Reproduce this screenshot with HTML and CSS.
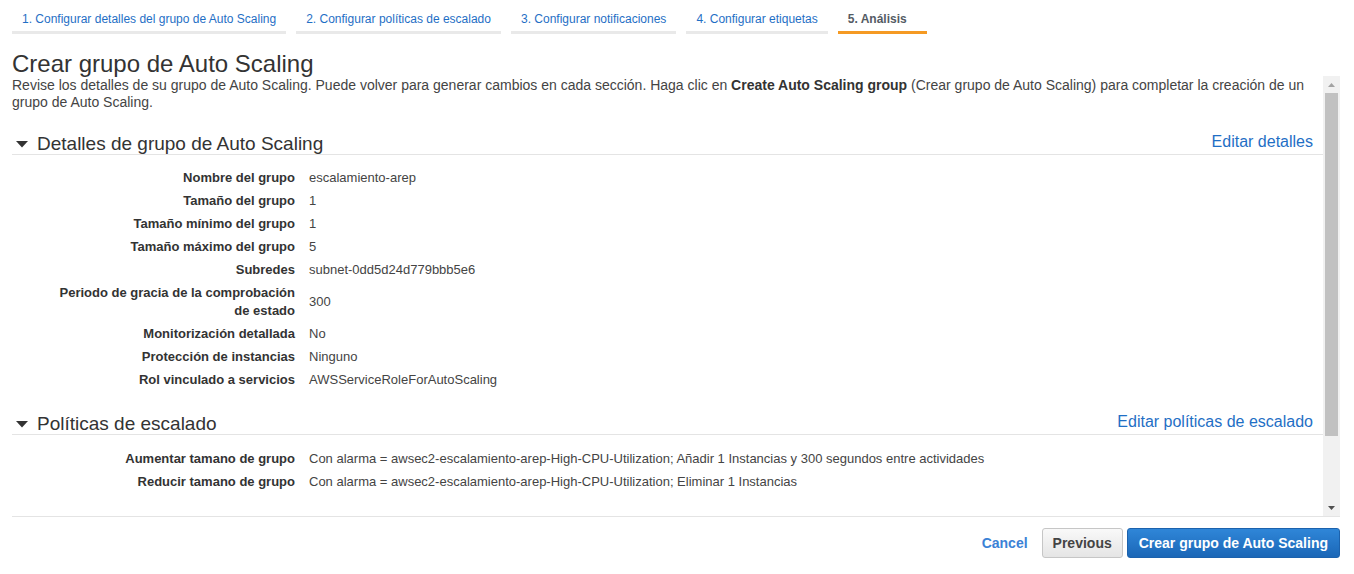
FILE: index.html
```html
<!DOCTYPE html>
<html lang="es">
<head>
<meta charset="utf-8">
<title>Crear grupo de Auto Scaling</title>
<link rel="stylesheet" href="styles.css">
</head>
<body>
<div class="page">
  <nav class="steps">
    <a class="step">1. Configurar detalles del grupo de Auto Scaling</a>
    <a class="step">2. Configurar políticas de escalado</a>
    <a class="step">3. Configurar notificaciones</a>
    <a class="step">4. Configurar etiquetas</a>
    <a class="step active">5. Análisis</a>
  </nav>

  <h1 class="title">Crear grupo de Auto Scaling</h1>

  <div class="scroll-area">
    <div class="scroll-content">
      <p class="desc">Revise los detalles de su grupo de Auto Scaling. Puede volver para generar cambios en cada sección. Haga clic en <b>Create Auto Scaling group</b> (Crear grupo de Auto Scaling) para completar la creación de un grupo de Auto Scaling.</p>

      <section class="section">
        <div class="section-head">
          <h2 class="section-title"><svg class="caret" width="12" height="7" viewBox="0 0 12 7"><polygon points="0,0 12,0 6,6.5" fill="#333"/></svg>Detalles de grupo de Auto Scaling</h2>
          <a class="edit-link">Editar detalles</a>
        </div>
        <dl class="details">
          <div class="row"><dt>Nombre del grupo</dt><dd>escalamiento-arep</dd></div>
          <div class="row"><dt>Tamaño del grupo</dt><dd>1</dd></div>
          <div class="row"><dt>Tamaño mínimo del grupo</dt><dd>1</dd></div>
          <div class="row"><dt>Tamaño máximo del grupo</dt><dd>5</dd></div>
          <div class="row"><dt>Subredes</dt><dd>subnet-0dd5d24d779bbb5e6</dd></div>
          <div class="row"><dt>Periodo de gracia de la comprobación de estado</dt><dd>300</dd></div>
          <div class="row"><dt>Monitorización detallada</dt><dd>No</dd></div>
          <div class="row"><dt>Protección de instancias</dt><dd>Ninguno</dd></div>
          <div class="row"><dt>Rol vinculado a servicios</dt><dd>AWSServiceRoleForAutoScaling</dd></div>
        </dl>
      </section>

      <section class="section">
        <div class="section-head">
          <h2 class="section-title"><svg class="caret" width="12" height="7" viewBox="0 0 12 7"><polygon points="0,0 12,0 6,6.5" fill="#333"/></svg>Políticas de escalado</h2>
          <a class="edit-link">Editar políticas de escalado</a>
        </div>
        <dl class="details details-tight">
          <div class="row"><dt>Aumentar tamano de grupo</dt><dd>Con alarma = awsec2-escalamiento-arep-High-CPU-Utilization; Añadir 1 Instancias y 300 segundos entre actividades</dd></div>
          <div class="row"><dt>Reducir tamano de grupo</dt><dd>Con alarma = awsec2-escalamiento-arep-High-CPU-Utilization; Eliminar 1 Instancias</dd></div>
        </dl>
      </section>
    </div>
    <div class="scrollbar">
      <div class="sb-btn"><svg width="7" height="4" viewBox="0 0 7 4"><polygon points="3.5,0 7,4 0,4" fill="#a3a3a3"/></svg></div>
      <div class="sb-thumb"></div>
      <div class="sb-space"></div>
      <div class="sb-btn"><svg width="7" height="4" viewBox="0 0 7 4"><polygon points="0,0 7,0 3.5,4" fill="#505050"/></svg></div>
    </div>
  </div>

  <footer class="actions">
    <a class="cancel">Cancel</a>
    <button class="btn btn-secondary">Previous</button>
    <button class="btn btn-primary">Crear grupo de Auto Scaling</button>
  </footer>
</div>
</body>
</html>
```

FILE: styles.css
```css
* { box-sizing: border-box; }

html, body {
  margin: 0;
  padding: 0;
  background: #fff;
}

body {
  font-family: "Liberation Sans", Arial, sans-serif;
  color: #444;
}

.page {
  padding: 0 14px 0 12px;
}

.steps {
  display: flex;
  gap: 10px;
}

.step {
  display: block;
  font-size: 12px;
  line-height: 14px;
  color: #1f6fc5;
  padding: 12px 10px 5px;
  border-bottom: 3px solid #e9e9e9;
  white-space: nowrap;
}

.step.active {
  color: #545b64;
  font-weight: bold;
  padding-left: 10px;
  padding-right: 20px;
  border-bottom-color: #f59a23;
}

.title {
  margin: 18px 0 0;
  font-size: 24px;
  line-height: 24px;
  font-weight: normal;
  color: #333;
}

.scroll-area {
  display: flex;
  height: 441px;
  overflow: hidden;
  border-bottom: 1px solid #e4e4e4;
}

.scroll-content {
  flex: 1;
  min-width: 0;
  overflow: hidden;
}

.desc {
  margin: 0;
  padding-top: 1px;
  font-size: 14px;
  line-height: 17px;
  color: #444;
}

.desc b { color: #333; }

.section {
  margin-top: 23px;
}

.section-head {
  display: flex;
  justify-content: space-between;
  align-items: flex-end;
  height: 21px;
  border-bottom: 1px solid #e4e4e4;
  padding-right: 10px;
}

.section-title {
  margin: 0;
  display: flex;
  align-items: center;
  gap: 9px;
  padding-left: 4px;
  font-size: 19px;
  line-height: 20px;
  font-weight: normal;
  color: #333;
}

.caret { flex: none; }

.edit-link {
  font-size: 16px;
  line-height: 16px;
  color: #1f6fc5;
  margin-bottom: 4px;
}

.details {
  margin: 11px 0 0;
}

.details-tight {
  margin-top: 12px;
}

.row {
  display: flex;
  gap: 14px;
  font-size: 13px;
  line-height: 18px;
  padding: 2.5px 0;
}

.row dt {
  flex: none;
  width: 240px;
  margin-left: 43px;
  text-align: right;
  font-weight: bold;
  color: #333;
  display: flex;
  align-items: center;
  justify-content: flex-end;
}

.row dd {
  margin: 0;
  color: #444;
  display: flex;
  align-items: center;
}

.scrollbar {
  flex: none;
  width: 17px;
  background: #f1f1f1;
  display: flex;
  flex-direction: column;
  align-items: center;
}

.sb-btn {
  flex: none;
  height: 17px;
  width: 17px;
  display: flex;
  align-items: center;
  justify-content: center;
}

.sb-thumb {
  flex: none;
  width: 13px;
  height: 343px;
  background: #c1c1c1;
}

.sb-space { flex: 1; }

.actions {
  display: flex;
  justify-content: flex-end;
  align-items: center;
  padding-top: 11px;
}

.cancel {
  font-size: 14px;
  font-weight: bold;
  color: #3b82d6;
  margin-right: 14px;
}

.btn {
  font-family: "Liberation Sans", Arial, sans-serif;
  font-size: 14px;
  font-weight: bold;
  height: 30px;
  line-height: 16px;
  border-radius: 3px;
  padding: 0 10px;
  cursor: pointer;
}

.btn-secondary {
  color: #444;
  background: linear-gradient(#f9f9f9, #e5e5e5);
  border: 1px solid #c6c6c6;
  margin-right: 4px;
}

.btn-primary {
  color: #fff;
  background: linear-gradient(#2f86d8, #1b67b7);
  border: 1px solid #1c62ad;
  padding: 0 11px;
}
```
